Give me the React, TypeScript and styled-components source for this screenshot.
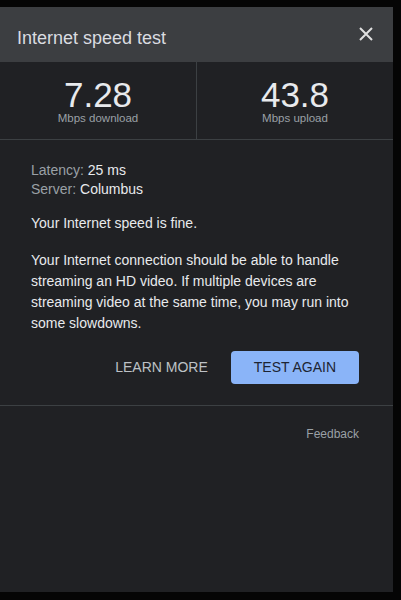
import React from "react";
import styled, { createGlobalStyle } from "styled-components";

const Global = createGlobalStyle`
  html, body { margin: 0; padding: 0; background: #050505; }
  body { font-family: "Liberation Sans", Arial, sans-serif; }
`;

const Panel = styled.div`
  margin-top: 7px;
  width: 393px;
  height: 585px;
  background: #202124;
  display: flex;
  flex-direction: column;
`;

const Header = styled.div`
  height: 55px;
  background: #3c3e41;
  display: flex;
  align-items: center;
  justify-content: space-between;
  padding: 7px 19px 0 17px;
  box-sizing: border-box;
`;

const Title = styled.div`
  font-size: 18px;
  color: #dadce0;
`;

const CloseButton = styled.button`
  background: none;
  border: none;
  padding: 0;
  width: 16px;
  height: 16px;
  display: flex;
  align-items: center;
  justify-content: center;
  margin-top: -9px;
  cursor: pointer;
`;

const Stats = styled.div`
  display: grid;
  grid-template-columns: 197px 1fr;
  border-bottom: 1px solid #3c4043;
`;

const Stat = styled.div<{ $divider?: boolean }>`
  display: flex;
  flex-direction: column;
  align-items: center;
  padding: 16.5px 0 14.5px;
  border-right: ${(p) => (p.$divider ? "1px solid #3c4043" : "none")};
`;

const Value = styled.div`
  font-size: 35px;
  line-height: 31px;
  color: #e8eaed;
`;

const Unit = styled.div`
  font-size: 11.5px;
  line-height: 14px;
  color: #9aa0a6;
  margin-top: 1px;
`;

const Body = styled.div`
  padding: 21px 34px 0 31px;
  color: #e8eaed;
  font-size: 14px;
`;

const InfoLine = styled.div`
  line-height: 19px;
`;

const Label = styled.span`
  color: #9aa0a6;
`;

const Verdict = styled.div`
  line-height: 18px;
  margin-top: 15px;
`;

const Paragraph = styled.p`
  margin: 17.5px 0 0;
  line-height: 21.33px;
`;

const Actions = styled.div`
  display: flex;
  justify-content: flex-end;
  margin-top: 16px;
`;

const ActionButton = styled.button<{ $primary?: boolean }>`
  height: 33px;
  padding: 0 23px;
  border: none;
  border-radius: 4px;
  font-family: inherit;
  font-size: 14px;
  background: ${(p) => (p.$primary ? "#8ab4f8" : "transparent")};
  color: ${(p) => (p.$primary ? "#1d2433" : "#bdc1c6")};
  cursor: pointer;
`;

const Divider = styled.div`
  margin-top: 21px;
  border-top: 1px solid #3c4043;
`;

const Footer = styled.div`
  display: flex;
  justify-content: flex-end;
  padding: 20px 34px 0;
`;

const FeedbackLink = styled.a`
  font-size: 12px;
  line-height: 16px;
  color: #9aa0a6;
  text-decoration: none;
`;

export default function App() {
  return (
    <>
      <Global />
      <Panel>
        <Header>
          <Title>Internet speed test</Title>
          <CloseButton aria-label="Close">
            <svg width="14" height="14" viewBox="0 0 14 14">
              <path d="M1 1 L13 13 M13 1 L1 13" stroke="#e0e0e0" strokeWidth="2" />
            </svg>
          </CloseButton>
        </Header>
        <Stats>
          <Stat $divider>
            <Value>7.28</Value>
            <Unit>Mbps download</Unit>
          </Stat>
          <Stat>
            <Value>43.8</Value>
            <Unit>Mbps upload</Unit>
          </Stat>
        </Stats>
        <Body>
          <InfoLine>
            <Label>Latency:</Label> 25 ms
          </InfoLine>
          <InfoLine>
            <Label>Server:</Label> Columbus
          </InfoLine>
          <Verdict>Your Internet speed is fine.</Verdict>
          <Paragraph>
            Your Internet connection should be able to handle streaming an HD
            video. If multiple devices are streaming video at the same time,
            you may run into some slowdowns.
          </Paragraph>
          <Actions>
            <ActionButton>LEARN MORE</ActionButton>
            <ActionButton $primary>TEST AGAIN</ActionButton>
          </Actions>
        </Body>
        <Divider />
        <Footer>
          <FeedbackLink href="#">Feedback</FeedbackLink>
        </Footer>
      </Panel>
    </>
  );
}
